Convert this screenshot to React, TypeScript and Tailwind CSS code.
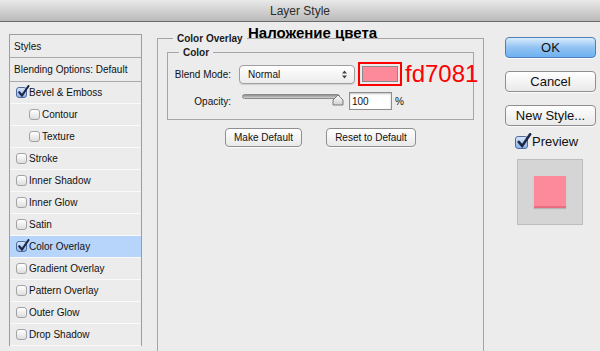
import React from "react";

const font = "font-['Liberation_Sans',Arial,sans-serif]";

const styleRows = [
  { label: "Bevel & Emboss", on: true },
  { label: "Contour", sub: true },
  { label: "Texture", sub: true },
  { label: "Stroke" },
  { label: "Inner Shadow" },
  { label: "Inner Glow" },
  { label: "Satin" },
  { label: "Color Overlay", on: true, active: true },
  { label: "Gradient Overlay" },
  { label: "Pattern Overlay" },
  { label: "Outer Glow" },
  { label: "Drop Shadow" },
];

function Check({ on, big }: { on?: boolean; big?: boolean }) {
  const size = big ? "size-[13px]" : "size-[11px]";
  return (
    <span
      className={`relative inline-block shrink-0 rounded-[3px] border ${size} ${
        on
          ? "border-[#4d6c9c] bg-linear-to-b from-[#d6e6fb] to-[#8fb3e6]"
          : "border-[#a3a3a3] bg-linear-to-b from-white to-[#dedede]"
      }`}
    >
      {on && (
        <svg
          className={`absolute left-[0px] ${big ? "-top-[4px] size-[16px]" : "-top-[3px] size-[13px]"}`}
          viewBox="0 0 13 13"
        >
          <path d="M2.2 7.2 L5 10.5 L11.5 1" stroke="#1c2647" strokeWidth="2.1" fill="none" strokeLinecap="round" />
        </svg>
      )}
    </span>
  );
}

function MacButton({ children, primary, w, h }: { children: React.ReactNode; primary?: boolean; w: string; h: string }) {
  return (
    <div
      className={`flex items-center justify-center rounded-[4px] border shadow-[0_1px_0_rgba(255,255,255,0.8)] ${w} ${h} ${
        primary
          ? "border-[#4f7fb7] bg-linear-to-b from-[#d9ebfc] via-[#92c3f3] to-[#6eb1f0]"
          : "border-[#8f8f8f] bg-linear-to-b from-white to-[#e9e9e9]"
      }`}
    >
      {children}
    </div>
  );
}

export default function App() {
  return (
    <div className={`relative h-[351px] w-[600px] overflow-hidden bg-[#ececec] text-[#111] ${font}`}>
      {/* title bar */}
      <div className="flex h-[22px] items-center justify-center border-b border-[#6b6b6b] bg-linear-to-b from-[#e9e9e9] to-[#bababa] text-[12px] text-[#2b2b2b]">
        Layer Style
      </div>

      <div className="flex">
        {/* styles list */}
        <div className="shrink-0 pl-[9px] pt-[12px]">
          <div className="w-[133px] border border-b-0 border-[#9d9d9d] text-[10px]">
            <div className="flex h-[23px] items-center border-b border-[#a9a9a9] pl-[4px]">Styles</div>
            <div className="flex h-[24px] items-center border-b border-[#a9a9a9] pl-[4px]">Blending Options: Default</div>
            {styleRows.map((r) => (
              <div
                key={r.label}
                className={`flex h-[22px] items-center gap-[2px] border-b border-[#fafafa] ${
                  r.sub ? "pl-[19px]" : "pl-[6px]"
                } ${r.active ? "bg-[#b7d4fa]" : ""}`}
              >
                <Check on={r.on} />
                <span>{r.label}</span>
              </div>
            ))}
          </div>
        </div>

        {/* main settings */}
        <fieldset className="ml-[15px] mt-[10px] h-[330px] w-[327px] min-w-0 shrink-0 border border-b-0 border-[#a5a5a5] p-0">
          <legend className="ml-[15px] px-[4px] text-[10px] font-bold leading-[13px] text-[#1a1a1a]">Color Overlay</legend>
          <div className="px-[9px]">
            <fieldset className="mt-[1px] min-w-0 border border-[#a5a5a5] p-0 pb-[9px]">
              <legend className="ml-[11px] px-[4px] text-[10px] font-bold leading-[13px] text-[#1a1a1a]">Color</legend>
              <div className="mt-[3px] flex items-center text-[10px]">
                <span className="w-[63px] shrink-0 text-right">Blend Mode:</span>
                <div className="ml-[8px] flex h-[19px] w-[116px] shrink-0 items-center justify-between rounded-[4px] border border-[#9f9f9f] bg-linear-to-b from-white to-[#ececec] pl-[8px] pr-[7px] shadow-[0_1px_1px_rgba(0,0,0,0.12)]">
                  <span>Normal</span>
                  <svg width="5" height="9" viewBox="0 0 5 9">
                    <path d="M0 3.5 L2.5 0.5 L5 3.5 Z M0 5.5 L2.5 8.5 L5 5.5 Z" fill="#444" />
                  </svg>
                </div>
                <div className="ml-[3px] h-[24px] w-[44px] shrink-0 border-2 border-[#ff0000] p-[2px]">
                  <div className="h-full w-full border border-[#8c8c8c] bg-[#fd8a9b]" />
                </div>
                <span className="ml-[3px] shrink-0 whitespace-nowrap text-[24px] leading-[24px] text-[#ff0000]">fd7081</span>
              </div>
              <div className="mt-[6px] flex items-center text-[10px]">
                <span className="w-[63px] shrink-0 text-right">Opacity:</span>
                <div className="relative ml-[11px] h-[18px] w-[101px] shrink-0">
                  <div className="absolute left-0 top-[2px] h-[5px] w-[98px] rounded-full border border-[#8a8a8a] bg-linear-to-b from-[#8f8f8f] to-[#d2d2d2]" />
                  <svg className="absolute left-[90px] top-[2px]" width="12" height="12" viewBox="0 0 12 12">
                    <defs>
                      <linearGradient id="th" x1="0" y1="0" x2="0" y2="1">
                        <stop offset="0" stopColor="#ffffff" />
                        <stop offset="1" stopColor="#cfcfcf" />
                      </linearGradient>
                    </defs>
                    <path d="M1 11 V6 L6 1 L11 6 V11 Z" fill="url(#th)" stroke="#7b7b7b" strokeWidth="1" />
                  </svg>
                </div>
                <div className="ml-[6px] flex h-[18px] w-[43px] shrink-0 items-center border border-[#8e8e8e] bg-white pl-[2px] shadow-[inset_0_1px_2px_rgba(0,0,0,0.25)]">
                  100
                </div>
                <span className="ml-[3px]">%</span>
              </div>
            </fieldset>
            <div className="mt-[8px] flex justify-center gap-[24px] text-[10px]">
              <MacButton w="w-[77px]" h="h-[19px]">Make Default</MacButton>
              <MacButton w="w-[90px]" h="h-[19px]">Reset to Default</MacButton>
            </div>
          </div>
        </fieldset>

        {/* buttons */}
        <div className="ml-[21px] flex shrink-0 flex-col pt-[15px] text-[13px]">
          <MacButton primary w="w-[91px]" h="h-[21px]">OK</MacButton>
          <div className="mt-[13px]">
            <MacButton w="w-[91px]" h="h-[21px]">Cancel</MacButton>
          </div>
          <div className="mt-[13px]">
            <MacButton w="w-[91px]" h="h-[21px]">New Style...</MacButton>
          </div>
          <div className="mt-[8px] flex h-[16px] items-center gap-[4px] pl-[10px]">
            <Check on big />
            <span>Preview</span>
          </div>
          <div className="ml-[12px] mt-[9px] flex h-[66px] w-[66px] items-center justify-center border border-[#bdbdbd] bg-[#d5d5d5]">
            <div className="h-[32px] w-[32px] border-b-2 border-[#e86f80] bg-[#fd8a9b] shadow-[0_1px_1px_rgba(0,0,0,0.15)]" />
          </div>
        </div>
      </div>

      {/* annotation over the dialog */}
      <span className="absolute left-[248px] top-[25px] text-[15px] font-bold leading-[15px] text-black">
        Наложение цвета
      </span>
    </div>
  );
}
